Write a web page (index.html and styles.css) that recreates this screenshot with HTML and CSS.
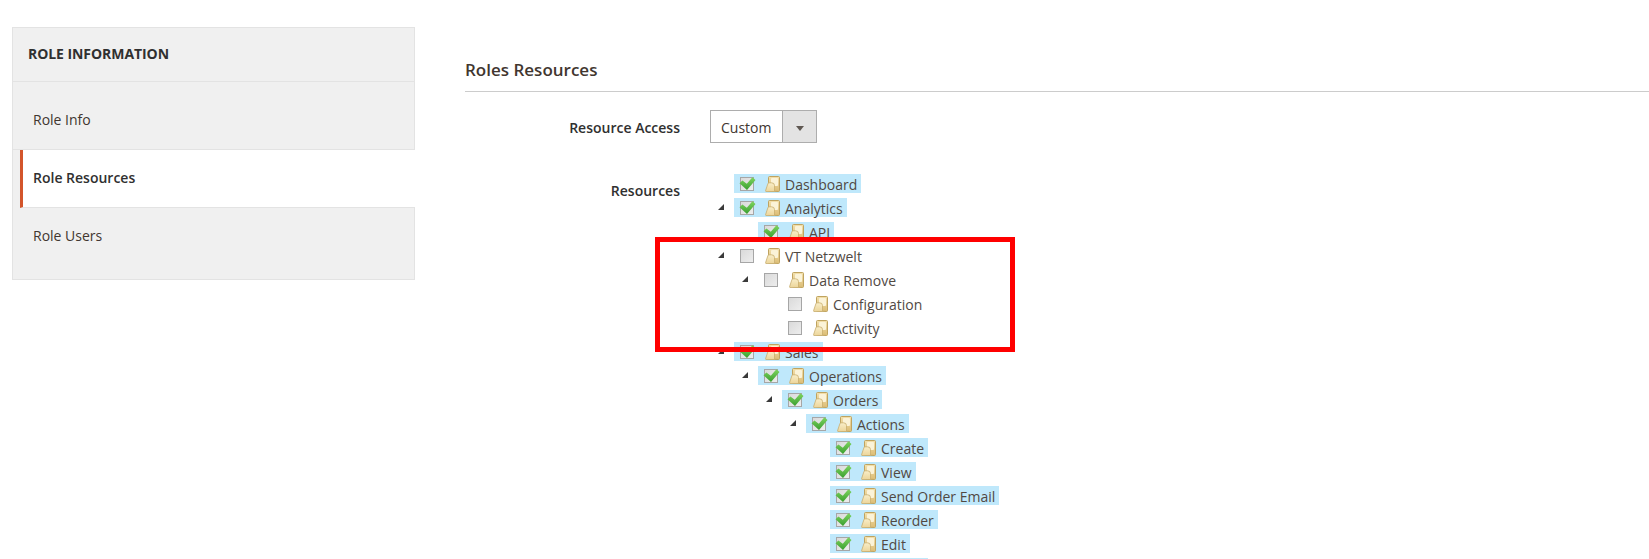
FILE: index.html
```html
<!DOCTYPE html>
<html lang="en">
<head>
<meta charset="utf-8">
<title>Role Resources</title>
<link rel="stylesheet" href="styles.css">
</head>
<body>
<svg class="defs" width="0" height="0" aria-hidden="true">
  <defs>
    <linearGradient id="boxfill" x1="0" y1="0" x2="1" y2="1">
      <stop offset="0" stop-color="#d9d9d9"/>
      <stop offset="1" stop-color="#eeeeee"/>
    </linearGradient>
    <linearGradient id="checkfill" x1="0" y1="0" x2="0" y2="1">
      <stop offset="0" stop-color="#7fd660"/>
      <stop offset="1" stop-color="#3a9e30"/>
    </linearGradient>
    <linearGradient id="backfill" x1="0" y1="0" x2="0" y2="1">
      <stop offset="0" stop-color="#f3e0ac"/>
      <stop offset="1" stop-color="#dcbd76"/>
    </linearGradient>
    <linearGradient id="frontfill" x1="0" y1="0" x2="0" y2="1">
      <stop offset="0" stop-color="#f9eec8"/>
      <stop offset="1" stop-color="#ecd59a"/>
    </linearGradient>
  </defs>
  <symbol id="box" viewBox="0 0 14 14">
    <rect x=".5" y=".5" width="13" height="13" fill="url(#boxfill)" stroke="#a6a6a6"/>
  </symbol>
  <symbol id="checked" viewBox="0 0 14 14" overflow="visible">
    <rect x=".5" y=".5" width="13" height="13" fill="url(#boxfill)" stroke="#a6a6a6"/>
    <path d="M-.5 6.200 2.400 3.400 6.800 6.800 12.400.2 15.500 3 7 13Z" fill="url(#checkfill)"/>
  </symbol>
  <symbol id="folder" viewBox="0 0 15 16">
    <path d="M3.500 15V1.500Q3.500.5 4.500.5H13.500Q14.500.5 14.500 1.500V14.500Q14.500 15.500 13.500 15.500Z" fill="url(#backfill)" stroke="#bfa35f"/>
    <rect x="6" y="2" width="7" height="8" rx="1" fill="#fbf3d8"/>
    <path d="M2.800 8Q3 6.800 4 6.800H6.500Q9.500 6.800 9.500 9.500V15.500H1Q.4 15.500.6 14.500Z" fill="url(#frontfill)" stroke="#c8ad6e" stroke-width=".8"/>
  </symbol>
</svg>
<div class="page">
  <aside class="side">
    <h3 class="side-title">ROLE INFORMATION</h3>
    <ul class="tabs">
      <li class="tab tab-first">Role Info</li>
      <li class="tab tab-active">Role Resources</li>
      <li class="tab tab-last">Role Users</li>
    </ul>
  </aside>
  <main class="main">
    <h2 class="legend">Roles Resources</h2>
    <div class="field field-select">
      <label class="label">Resource Access</label>
      <div class="select"><span class="select-value">Custom</span><span class="select-arrow"></span></div>
    </div>
    <div class="field field-tree">
      <label class="label">Resources</label>
      <ul class="tree">
        <li><div class="row"><i class="tog"></i><a class="node on"><svg class="cb"><use href="#checked"/></svg><svg class="fo"><use href="#folder"/></svg>Dashboard</a></div></li>
        <li><div class="row"><i class="tog open"></i><a class="node on"><svg class="cb"><use href="#checked"/></svg><svg class="fo"><use href="#folder"/></svg>Analytics</a></div>
          <ul>
            <li><div class="row"><i class="tog"></i><a class="node on"><svg class="cb"><use href="#checked"/></svg><svg class="fo"><use href="#folder"/></svg>API</a></div></li>
          </ul>
        </li>
        <li><div class="row"><i class="tog open"></i><a class="node"><svg class="cb"><use href="#box"/></svg><svg class="fo"><use href="#folder"/></svg>VT Netzwelt</a></div>
          <ul>
            <li><div class="row"><i class="tog open"></i><a class="node"><svg class="cb"><use href="#box"/></svg><svg class="fo"><use href="#folder"/></svg>Data Remove</a></div>
              <ul>
                <li><div class="row"><i class="tog"></i><a class="node"><svg class="cb"><use href="#box"/></svg><svg class="fo"><use href="#folder"/></svg>Configuration</a></div></li>
                <li><div class="row"><i class="tog"></i><a class="node"><svg class="cb"><use href="#box"/></svg><svg class="fo"><use href="#folder"/></svg>Activity</a></div></li>
              </ul>
            </li>
          </ul>
        </li>
        <li><div class="row"><i class="tog open"></i><a class="node on"><svg class="cb"><use href="#checked"/></svg><svg class="fo"><use href="#folder"/></svg>Sales</a></div>
          <ul>
            <li><div class="row"><i class="tog open"></i><a class="node on"><svg class="cb"><use href="#checked"/></svg><svg class="fo"><use href="#folder"/></svg>Operations</a></div>
              <ul>
                <li><div class="row"><i class="tog open"></i><a class="node on"><svg class="cb"><use href="#checked"/></svg><svg class="fo"><use href="#folder"/></svg>Orders</a></div>
                  <ul>
                    <li><div class="row"><i class="tog open"></i><a class="node on"><svg class="cb"><use href="#checked"/></svg><svg class="fo"><use href="#folder"/></svg>Actions</a></div>
                      <ul>
                        <li><div class="row"><i class="tog"></i><a class="node on"><svg class="cb"><use href="#checked"/></svg><svg class="fo"><use href="#folder"/></svg>Create</a></div></li>
                        <li><div class="row"><i class="tog"></i><a class="node on"><svg class="cb"><use href="#checked"/></svg><svg class="fo"><use href="#folder"/></svg>View</a></div></li>
                        <li><div class="row"><i class="tog"></i><a class="node on"><svg class="cb"><use href="#checked"/></svg><svg class="fo"><use href="#folder"/></svg>Send Order Email</a></div></li>
                        <li><div class="row"><i class="tog"></i><a class="node on"><svg class="cb"><use href="#checked"/></svg><svg class="fo"><use href="#folder"/></svg>Reorder</a></div></li>
                        <li><div class="row"><i class="tog"></i><a class="node on"><svg class="cb"><use href="#checked"/></svg><svg class="fo"><use href="#folder"/></svg>Edit</a></div></li>
                        <li><div class="row"><i class="tog"></i><a class="node on"><svg class="cb"><use href="#checked"/></svg><svg class="fo"><use href="#folder"/></svg>Cancel</a></div></li>
                      </ul>
                    </li>
                  </ul>
                </li>
              </ul>
            </li>
          </ul>
        </li>
      </ul>
    </div>
  </main>
</div>
<div class="callout"></div>
</body>
</html>
```
FILE: styles.css
```css
* { box-sizing: border-box; }
html, body { margin: 0; height: 559px; overflow: hidden; background: #fff; }
body { position: relative; font-family: "Open Sans", sans-serif; font-size: 14px; color: #41362f; }
ul { list-style: none; margin: 0; padding: 0; }
.defs { position: absolute; }

.page { display: flex; align-items: flex-start; }

.side { width: 403px; margin: 27px 0 0 12px; height: 253px; background: #f0f0f0; border: 1px solid #e3e3e3; }
.side-title { margin: 0; height: 54px; padding-left: 15px; font-size: 14px; letter-spacing: -.06px; line-height: 52px; font-weight: 700; color: #303030; border-bottom: 1px solid #e3e3e3; }
.tab { padding-left: 20px; color: #41362f; }
.tab-first { height: 68px; padding-top: 28px; line-height: 20px; border-bottom: 1px solid #e3e3e3; }
.tab-active { height: 58px; margin-left: 7px; margin-right: -1px; padding-left: 10px; line-height: 56px; font-weight: 600; color: #303030; background: #fff; border-left: 3px solid #d3552b; border-bottom: 1px solid #e3e3e3; }
.tab-last { height: 58px; line-height: 56px; }

.main { flex: 1; margin-left: 50px; min-width: 0; }
.legend { margin: 58px 0 0; height: 34px; font-size: 17px; line-height: 24px; font-weight: 600; color: #41362f; border-bottom: 1px solid #ccc; }

.field { display: grid; grid-template-columns: 215px 1fr; column-gap: 30px; }
.field-select { margin-top: 18px; align-items: center; }
.field-tree { margin-top: 31px; }
.label { text-align: right; font-weight: 600; color: #303030; line-height: 20px; }
.field-select .label { padding-top: 2px; }
.field-tree .label { padding-top: 7px; }

.select { display: flex; width: 107px; height: 33px; border: 1px solid #adadad; background: #fff; }
.select-value { width: 71px; padding-left: 10px; line-height: 33px; color: #41362f; }
.select-arrow { flex: 1; display: flex; align-items: center; justify-content: center; padding-top: 3px; background: #e3e3e3; border-left: 1px solid #adadad; }
.select-arrow::after { content: ""; border-style: solid; border-width: 5px 4px 0; border-color: #5f5852 transparent transparent; }

.tree { margin-left: 6px; color: #514943; }
.tree ul { padding-left: 24px; }
.row { display: flex; align-items: flex-start; height: 19px; margin-bottom: 5px; }
.tog { flex: none; width: 18px; height: 19px; position: relative; }
.tog.open::after { content: ""; position: absolute; left: 2px; top: 6px; border-style: solid; border-width: 0 0 6px 6px; border-color: transparent transparent #3a3a3a; }
.node { display: flex; align-items: flex-start; height: 19px; padding: 0 4px 0 6px; line-height: 21px; white-space: nowrap; }
.node.on { background: #bfe8fb; }
.cb { flex: none; width: 14px; height: 14px; margin: 3px 11px 0 0; overflow: visible; }
.fo { flex: none; width: 15px; height: 16px; margin: 2px 5px 0 0; }

.callout { position: absolute; left: 655px; top: 237px; width: 360px; height: 115px; border: 5px solid #f00; }
```
